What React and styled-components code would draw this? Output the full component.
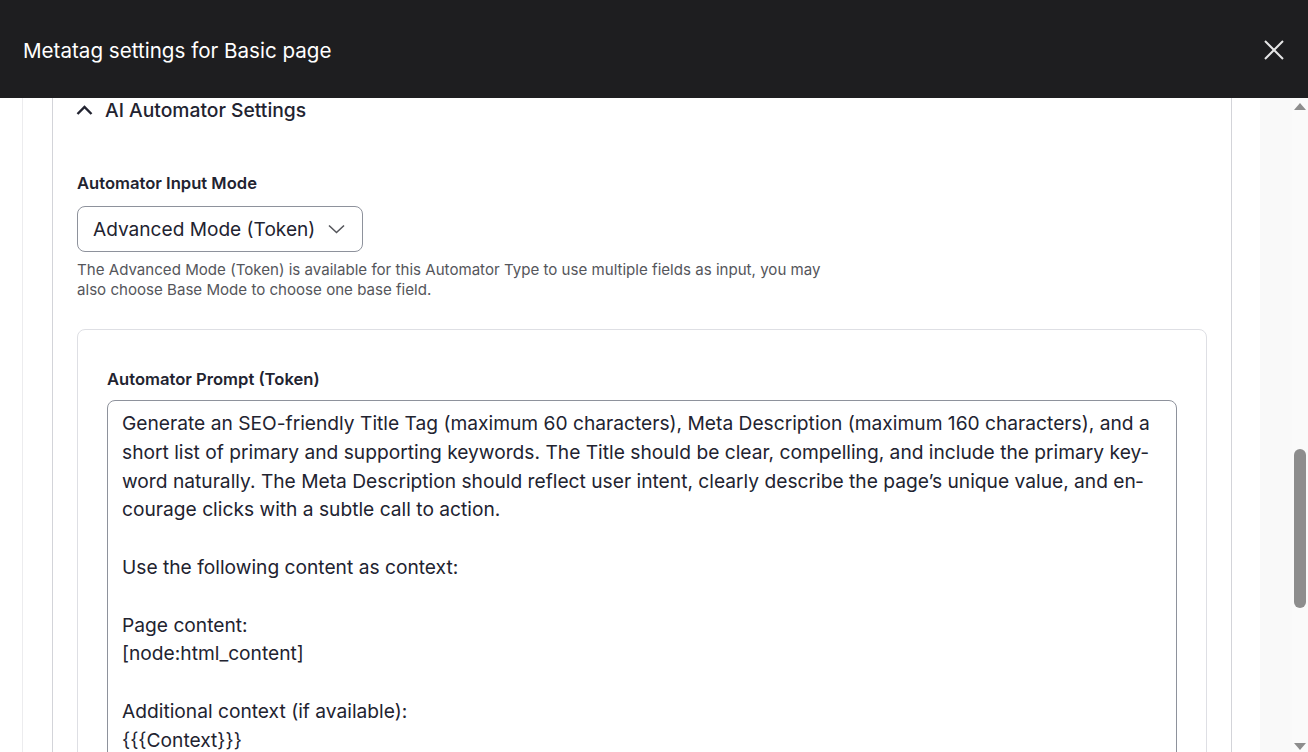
import React from "react";
import styled, { createGlobalStyle } from "styled-components";

const GlobalStyle = createGlobalStyle`
  html, body {
    margin: 0;
    padding: 0;
    background: #ffffff;
  }
  body {
    font-family: Inter, "Noto Sans", "Liberation Sans", sans-serif;
    color: #222330;
  }
`;

const Frame = styled.div`
  width: 1308px;
  height: 752px;
  display: flex;
  flex-direction: column;
  overflow: hidden;
`;

const TitleBar = styled.header`
  height: 98px;
  flex-shrink: 0;
  background: #1e1e20;
  display: flex;
  align-items: center;
  justify-content: space-between;
  padding: 2px 14px 0 23px;
  box-sizing: border-box;
`;

const DialogTitle = styled.h1`
  margin: 0;
  font-size: 20.6px;
  font-weight: 400;
  color: #ffffff;
`;

const CloseButton = styled.button`
  width: 40px;
  height: 40px;
  border: none;
  background: transparent;
  padding: 0;
  display: flex;
  align-items: center;
  justify-content: center;
  cursor: pointer;
`;

const Body = styled.div`
  flex: 1;
  display: flex;
  overflow: hidden;
  min-height: 0;
`;

const Gutter = styled.div`
  width: 22px;
  flex-shrink: 0;
  background: #ffffff;
  border-right: 1px solid #ececee;
`;

const Scroller = styled.div`
  flex: 1;
  padding: 0 28px 0 29px;
  overflow: hidden;
`;

const Details = styled.section`
  margin-top: -12px;
  border: 1px solid #d3d4d9;
  border-bottom: none;
  border-radius: 8px 8px 0 0;
  min-height: 800px;
`;

const Summary = styled.div`
  height: 46px;
  display: flex;
  align-items: center;
  gap: 12px;
  padding-left: 23px;
  font-size: 19.3px;
  font-weight: 500;
  color: #222330;
`;

const DetailsBody = styled.div`
  padding: 40px 24px 0 24px;
`;

const Label = styled.label`
  display: block;
  font-size: 16.6px;
  font-weight: 600;
  line-height: 20px;
  color: #222330;
  margin-bottom: ${({ $gap }) => $gap || 13}px;
`;

const Select = styled.div`
  width: 286px;
  height: 46px;
  box-sizing: border-box;
  border: 1px solid #8e929c;
  border-radius: 8px;
  display: flex;
  align-items: center;
  justify-content: space-between;
  padding: 0 17px 0 15px;
  font-size: 19.1px;
  color: #222330;
`;

const Description = styled.div`
  margin-top: 8px;
  max-width: 760px;
  font-size: 15.1px;
  line-height: 20px;
  color: #55565b;
`;

const Card = styled.div`
  margin-top: 29px;
  border: 1px solid #dedfe4;
  border-radius: 8px;
  padding: 39px 29px 0 29px;
  min-height: 600px;
`;

const PromptBox = styled.textarea`
  display: block;
  width: 100%;
  box-sizing: border-box;
  height: 520px;
  border: 1px solid #8e929c;
  border-radius: 8px;
  padding: 8px 14px;
  margin: 0;
  font-family: Inter, "Noto Sans", "Liberation Sans", sans-serif;
  font-size: 19.2px;
  line-height: 28.8px;
  color: #222330;
  background: #ffffff;
  resize: none;
  overflow: hidden;
  outline: none;
`;

const ScrollStrip = styled.div`
  width: 48px;
  flex-shrink: 0;
  background: #f9f9f9;
  display: flex;
  justify-content: flex-end;
`;

const ScrollTrack = styled.div`
  width: 16px;
  display: flex;
  flex-direction: column;
  align-items: center;
  background: #fafafa;
`;

const Arrow = styled.div`
  width: 0;
  height: 0;
  margin: ${({ $down }) => ($down ? "auto 0 2px" : "5px 0 0")};
  border-left: 6px solid transparent;
  border-right: 6px solid transparent;
  ${({ $down }) =>
    $down ? "border-top: 7px solid #8d8d8d;" : "border-bottom: 7px solid #8d8d8d;"}
`;

const Thumb = styled.div`
  width: 12px;
  height: 159px;
  margin-top: 339px;
  border-radius: 6px;
  background: #8d8d8d;
`;

const promptText = `Generate an SEO-friendly Title Tag (maximum 60 characters), Meta Description (maximum 160 characters), and a short list of primary and supporting keywords. The Title should be clear, compelling, and include the primary key\u00ADword naturally. The Meta Description should reflect user intent, clearly describe the page\u2019s unique value, and en\u00ADcourage clicks with a subtle call to action.

Use the following content as context:

Page content:
[node:html_content]

Additional context (if available):
{{{Context}}}

Return the result in the following format:`;

const CloseIcon = () => (
  <svg width="22" height="22" viewBox="0 0 22 22" fill="none">
    <path d="M2 2L20 20M20 2L2 20" stroke="#e6e6e6" strokeWidth="2" />
  </svg>
);

const ChevronUp = () => (
  <svg width="17" height="12" viewBox="0 0 17 12" fill="none">
    <path d="M1.5 10L8.5 3L15.5 10" stroke="#222330" strokeWidth="2.4" />
  </svg>
);

const ChevronDown = () => (
  <svg width="17" height="10" viewBox="0 0 17 10" fill="none">
    <path d="M1 1.5L8.5 8.5L16 1.5" stroke="#55565b" strokeWidth="1.6" />
  </svg>
);

export default function App() {
  return (
    <>
      <GlobalStyle />
      <Frame>
        <TitleBar>
          <DialogTitle>Metatag settings for Basic page</DialogTitle>
          <CloseButton aria-label="Close">
            <CloseIcon />
          </CloseButton>
        </TitleBar>
        <Body>
          <Gutter />
          <Scroller>
            <Details>
              <Summary>
                <ChevronUp />
                AI Automator Settings
              </Summary>
              <DetailsBody>
                <Label>Automator Input Mode</Label>
                <Select>
                  <span>Advanced Mode (Token)</span>
                  <ChevronDown />
                </Select>
                <Description>
                  The Advanced Mode (Token) is available for this Automator Type to use
                  multiple fields as input, you may also choose Base Mode to choose one
                  base field.
                </Description>
                <Card>
                  <Label $gap={11}>Automator Prompt (Token)</Label>
                  <PromptBox readOnly defaultValue={promptText} />
                </Card>
              </DetailsBody>
            </Details>
          </Scroller>
          <ScrollStrip>
            <ScrollTrack>
              <Arrow />
              <Thumb />
              <Arrow $down />
            </ScrollTrack>
          </ScrollStrip>
        </Body>
      </Frame>
    </>
  );
}
